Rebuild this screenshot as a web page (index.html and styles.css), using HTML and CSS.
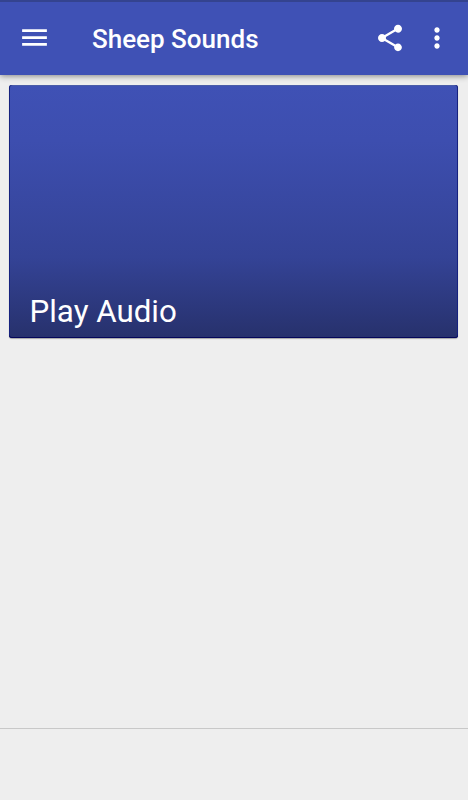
FILE: index.html
```html
<!DOCTYPE html>
<html lang="en">
<head>
    <meta charset="UTF-8">
    <meta name="viewport" content="width=device-width, initial-scale=1.0">
    <title>Sheep Sounds</title>
    <link rel="stylesheet" href="styles.css">
</head>
<body>

    <header class="toolbar">
        <button class="icon-btn menu-btn" aria-label="Menu">
            <svg width="33" height="33" viewBox="0 0 24 24"><path d="M3 18h18v-2H3v2zm0-5h18v-2H3v2zm0-7v2h18V6H3z"/></svg>
        </button>
        <h1 class="title">Sheep Sounds</h1>
        <button class="icon-btn share-btn" aria-label="Share">
            <svg width="32" height="32" viewBox="0 0 24 24"><path d="M18 16.08c-.76 0-1.44.3-1.96.77L8.91 12.7c.05-.23.09-.46.09-.7s-.04-.47-.09-.7l7.05-4.11c.54.5 1.25.81 2.04.81 1.66 0 3-1.34 3-3s-1.34-3-3-3-3 1.34-3 3c0 .24.04.47.09.7L8.04 9.81C7.5 9.31 6.79 9 6 9c-1.66 0-3 1.34-3 3s1.34 3 3 3c.79 0 1.5-.31 2.04-.81l7.12 4.16c-.05.21-.08.43-.08.65 0 1.61 1.31 2.92 2.92 2.92s2.92-1.31 2.92-2.92-1.31-2.92-2.92-2.92z"/></svg>
        </button>
        <button class="icon-btn more-btn" aria-label="More options">
            <svg width="32" height="32" viewBox="0 0 24 24"><path d="M12 8c1.1 0 2-.9 2-2s-.9-2-2-2-2 .9-2 2 .9 2 2 2zm0 2c-1.1 0-2 .9-2 2s.9 2 2 2 2-.9 2-2-.9-2-2-2zm0 6c-1.1 0-2 .9-2 2s.9 2 2 2 2-.9 2-2-.9-2-2-2z"/></svg>
        </button>
    </header>

    <main class="content">
        <div class="card">
            <span class="card-title">Play Audio</span>
        </div>
    </main>

    <!-- Banner area -->
    <footer class="banner"></footer>

</body>
</html>
```
FILE: styles.css
```css
* {
    box-sizing: border-box;
}
body {
    margin: 0;
    height: 100vh;
    display: flex;
    flex-direction: column;
    background-color: #eeeeee;
    font-family: Roboto, sans-serif;
}
.toolbar {
    height: 75px;
    display: flex;
    align-items: center;
    padding: 0 15px 2px 18px;
    background-color: #3f51b5;
    border-top: 2px solid #34438f;
    box-shadow: 0 1px 6px rgba(0, 0, 0, 0.45);
}
.icon-btn {
    display: flex;
    padding: 0;
    border: none;
    background: none;
}
.icon-btn svg {
    fill: #fff;
}
.title {
    flex: 1;
    margin: 0 0 0 41px;
    padding-top: 2px;
    color: #fff;
    font-size: 26px;
    font-weight: 500;
}
.more-btn {
    margin-left: 15px;
}
.content {
    flex: 1;
    padding: 10px 10px 0 9px;
}
.card {
    height: 253px;
    display: flex;
    align-items: flex-end;
    padding: 0 20.5px 8px;
    border-radius: 3px;
    background: linear-gradient(#3f51b5, #3d4eaf 22%, #344396 68%, #27316c);
    box-shadow: inset 0 -1px 0 #04065a, inset -1px 0 0 #16227f, inset 1px 0 0 #16227f, inset 0 1px 0 #4a5ca8, 0 1px 1px rgba(0, 0, 0, 0.3);
}
.card-title {
    color: #fff;
    font-size: 31.3px;
}
.banner {
    height: 72px;
    border-top: 1px solid #c8c8c8;
}
```
